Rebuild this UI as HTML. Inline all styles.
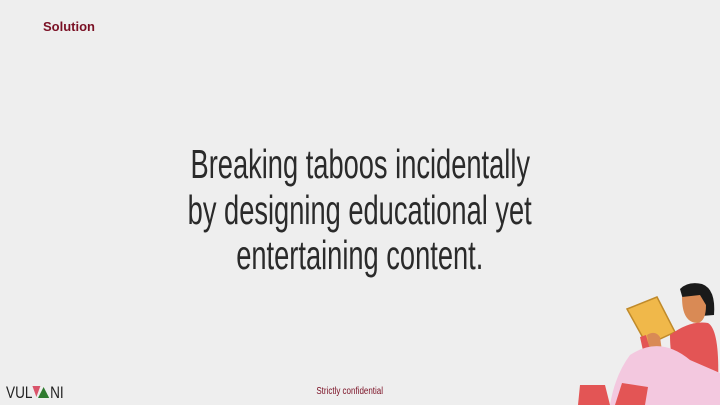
<!DOCTYPE html>
<html><head><meta charset="utf-8"><style>
html,body{margin:0;padding:0}
body{width:720px;height:405px;background:#eeeeee;position:relative;overflow:hidden;font-family:"Liberation Sans",sans-serif}
.sol{position:absolute;left:43px;top:19px;font-size:13px;font-weight:bold;color:#7a1024}
.t{position:absolute;left:0;width:720px;text-align:center;font-size:41px;color:#2a2a2a;line-height:46px;white-space:nowrap}
.t span{display:inline-block;transform:scaleX(0.665);transform-origin:center}
.logo{position:absolute;left:6px;top:383px;font-size:17px;color:#222}
.logo span{display:inline-block;transform:scaleX(0.8);transform-origin:left}
.conf{position:absolute;left:0;width:720px;text-align:center;top:386px;font-size:10px;color:#7a1024}
.conf span{display:inline-block;transform:scaleX(0.8);margin-left:-20px}
</style></head><body>
<div class="sol">Solution</div>
<div class="t" style="top:141px"><span>Breaking taboos incidentally</span></div>
<div class="t" style="top:187px"><span>by designing educational yet</span></div>
<div class="t" style="top:232px"><span>entertaining content.</span></div>
<div class="logo"><span>VUL<svg width="22" height="14" viewBox="0 0 22 14" style="vertical-align:-1px"><polygon points="0,1 10,1 5,12" fill="#d9546a"/><polygon points="7,13 14,2 21,13" fill="#2f7a2f"/></svg>NI</span></div>
<div class="conf"><span>Strictly confidential</span></div>
<svg style="position:absolute;left:570px;top:275px" width="150" height="130" viewBox="0 0 150 130">
<polygon points="57,34 87,22 105,57 77,70" fill="#f0b84a" stroke="#c08a2a" stroke-width="1.5"/>
<path d="M110,14 Q118,6 132,9 Q146,14 144,40 L118,42 Z" fill="#1a1a1a"/>
<path d="M112,22 Q112,48 128,48 Q136,46 136,30 L130,20 Z" fill="#d98a55"/>
<path d="M100,60 Q120,45 138,48 Q150,55 148,110 L115,105 Q100,95 100,60 Z" fill="#e35555"/>
<path d="M77,60 Q85,55 90,62 L94,90 L82,92 Z" fill="#d98a55"/>
<path d="M70,62 L76,60 L86,96 L78,98 Z" fill="#e35555"/>
<path d="M60,80 Q90,60 120,85 L150,98 L150,130 L40,130 Q45,100 60,80 Z" fill="#f3c8df"/>
<path d="M8,130 L10,110 L35,110 L40,130 Z" fill="#e35555"/>
<path d="M45,130 L52,108 L78,112 L75,130 Z" fill="#e35555"/>
</svg>
</body></html>
